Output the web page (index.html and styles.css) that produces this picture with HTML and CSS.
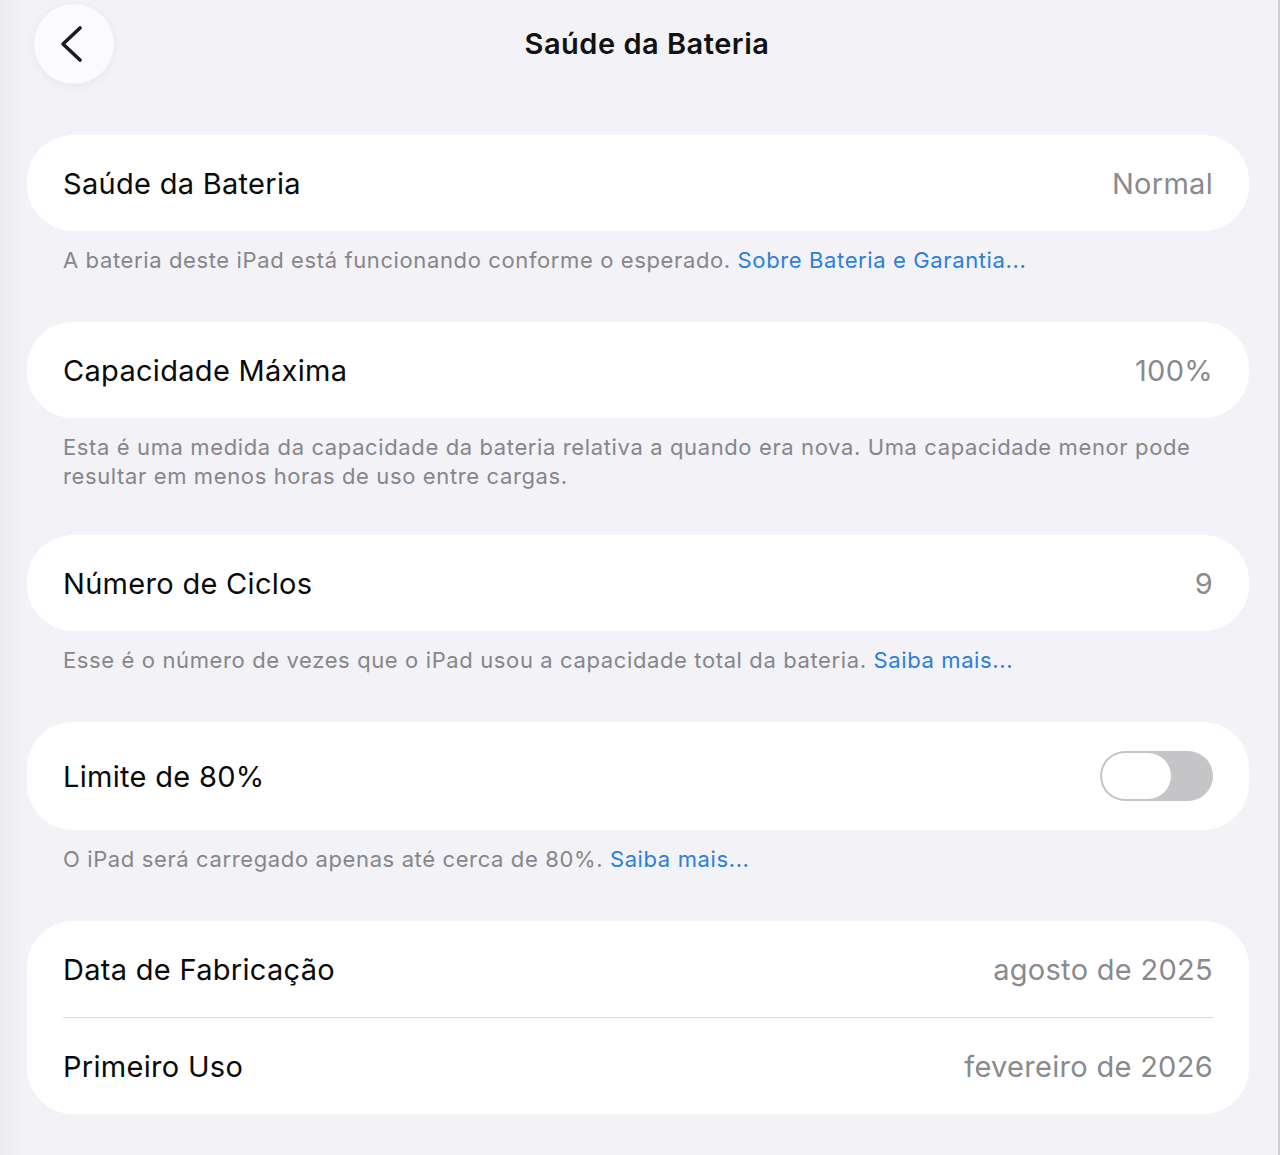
FILE: index.html
```html
<!DOCTYPE html>
<html lang="pt-BR">
<head>
<meta charset="utf-8">
<title>Saúde da Bateria</title>
<link rel="stylesheet" href="styles.css">
</head>
<body>
<div class="page">
  <header class="header">
    <button class="back" aria-label="Voltar">
      <svg width="80" height="80" viewBox="0 0 80 80"><path d="M46 24 L29 40 L46 56" fill="none" stroke="#1c1c1e" stroke-width="3.6" stroke-linecap="round" stroke-linejoin="round"/></svg>
    </button>
    <h1 class="title">Saúde da Bateria</h1>
  </header>

  <section class="group">
    <div class="card">
      <div class="row"><span class="label">Saúde da Bateria</span><span class="value">Normal</span></div>
    </div>
    <p class="note">A bateria deste iPad está funcionando conforme o esperado. <a class="link">Sobre Bateria e Garantia...</a></p>
  </section>

  <section class="group">
    <div class="card">
      <div class="row"><span class="label">Capacidade Máxima</span><span class="value">100%</span></div>
    </div>
    <p class="note note-multi">Esta é uma medida da capacidade da bateria relativa a quando era nova. Uma capacidade menor pode resultar em menos horas de uso entre cargas.</p>
  </section>

  <section class="group">
    <div class="card">
      <div class="row"><span class="label">Número de Ciclos</span><span class="value">9</span></div>
    </div>
    <p class="note">Esse é o número de vezes que o iPad usou a capacidade total da bateria. <a class="link">Saiba mais...</a></p>
  </section>

  <section class="group">
    <div class="card">
      <div class="row row-tall"><span class="label">Limite de 80%</span><span class="toggle"><span class="knob"></span></span></div>
    </div>
    <p class="note">O iPad será carregado apenas até cerca de 80%. <a class="link">Saiba mais...</a></p>
  </section>

  <section class="group">
    <div class="card">
      <div class="row"><span class="label">Data de Fabricação</span><span class="value">agosto de 2025</span></div>
      <div class="sep"></div>
      <div class="row"><span class="label">Primeiro Uso</span><span class="value">fevereiro de 2026</span></div>
    </div>
  </section>
</div>
</body>
</html>
```
FILE: styles.css
```css
html, body {
  margin: 0;
  padding: 0;
  background: #f2f2f7;
}
body {
  font-family: Inter, "Liberation Sans", Arial, sans-serif;
  color: #000;
}
.page {
  width: 1280px;
  height: 1155px;
  box-sizing: border-box;
  border-right: 2px solid #cfcfd3;
  padding-left: 27px;
  background: linear-gradient(to right, #ececf0 0px, #f2f2f7 26px);
}
.header {
  height: 135px;
  position: relative;
  display: flex;
  align-items: flex-start;
}
.back {
  margin: 4px 0 0 7px;
  width: 80px;
  height: 80px;
  border-radius: 50%;
  border: none;
  padding: 0;
  background: #fbfbfd;
  box-shadow: 0 2px 10px rgba(0,0,0,0.05);
  display: flex;
  align-items: center;
  justify-content: center;
}
.title {
  position: absolute;
  left: 0;
  right: 0;
  top: 25px;
  margin: 0;
  padding-right: 11px;
  text-align: center;
  font-size: 29px;
  font-weight: 600;
  letter-spacing: 0.5px;
  line-height: 38px;
  color: #111;
  pointer-events: none;
}
.group {
  width: 1222px;
}
.card {
  background: #fff;
  border-radius: 46px;
}
.row {
  height: 96px;
  display: flex;
  align-items: center;
  justify-content: space-between;
  padding: 0 36px;
}
.row-tall {
  height: 108px;
}
.label {
  font-size: 29px;
  letter-spacing: 0.3px;
  color: #0a0a0a;
}
.value {
  font-size: 29px;
  letter-spacing: 0.3px;
  color: #8a8a8e;
}
.sep {
  height: 1px;
  background: #dcdce0;
  margin: 0 36px;
}
.note {
  margin: 0;
  padding: 15px 36px 47px;
  font-size: 22px;
  letter-spacing: 0.62px;
  line-height: 29px;
  color: #86868b;
}
.note-multi {
  padding-bottom: 44px;
}
.link {
  color: #2b7fdb;
}
.toggle {
  width: 113px;
  height: 50px;
  border-radius: 25px;
  background: #c5c5c7;
  box-sizing: border-box;
  padding: 2px;
  display: flex;
  align-items: center;
}
.knob {
  width: 69px;
  height: 46px;
  border-radius: 23px;
  background: #fff;
}
```
